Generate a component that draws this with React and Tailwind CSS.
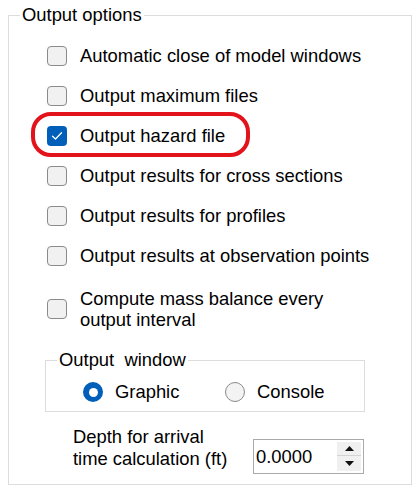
import React from "react";

function Checkbox({ checked }) {
  if (checked) {
    return (
      <div className="w-[20px] h-[20px] shrink-0 rounded-[4px] bg-[#005fb8] flex items-center justify-center">
        <svg width="12" height="10" viewBox="0 0 12 10" fill="none">
          <path d="M1.5 5.2 L4.5 8 L10.5 1.8" stroke="#ffffff" strokeWidth="1.3" strokeLinecap="round" strokeLinejoin="round" />
        </svg>
      </div>
    );
  }
  return <div className="w-[20px] h-[20px] shrink-0 rounded-[4px] border border-[#8a8a8a] bg-[#f1f1f1]" />;
}

function Radio({ checked }) {
  if (checked) {
    return (
      <div className="w-[20px] h-[20px] shrink-0 rounded-full bg-[#005fb8] flex items-center justify-center">
        <div className="w-[9px] h-[9px] rounded-full bg-white" />
      </div>
    );
  }
  return <div className="w-[20px] h-[20px] shrink-0 rounded-full border border-[#8a8a8a] bg-[#f3f3f3]" />;
}

function Row({ checked, children }) {
  return (
    <div className="flex items-center h-[40px] gap-[13px]">
      <Checkbox checked={checked} />
      <span className="whitespace-nowrap">{children}</span>
    </div>
  );
}

export default function App() {
  return (
    <div
      className="relative w-[419px] h-[490px] bg-white text-black text-[18.4px] overflow-hidden"
      style={{ fontFamily: '"Liberation Sans", Arial, sans-serif' }}
    >
      <fieldset className="ml-[8px] mt-[3px] w-[404px] h-[482px] border border-[#dcdcdc]">
        <legend className="ml-[11px] px-[2px] leading-[24px]">Output options</legend>
        <div className="flex flex-col">
          <div className="pt-[9px] pl-[38px] flex flex-col">
            <Row>Automatic close of model windows</Row>
            <Row>Output maximum files</Row>
            <Row checked>Output hazard file</Row>
            <Row>Output results for cross sections</Row>
            <Row>Output results for profiles</Row>
            <Row>Output results at observation points</Row>
            <div className="flex items-center gap-[13px] mt-[12px]">
              <Checkbox />
              <div className="leading-[21px]">
                Compute mass balance every
                <br />
                output interval
              </div>
            </div>
          </div>

          <fieldset className="ml-[36px] mt-[18px] w-[320px] h-[64px] border border-[#dcdcdc]">
            <legend className="ml-[11px] px-[2px] leading-[24px] whitespace-pre">Output  window</legend>
            <div className="mt-[8px] pl-[37px] h-[24px] flex items-center">
              <div className="w-[142px] flex items-center gap-[12px]">
                <Radio checked />
                <span>Graphic</span>
              </div>
              <div className="flex items-center gap-[12px]">
                <Radio />
                <span>Console</span>
              </div>
            </div>
          </fieldset>

          <div className="mt-[14px] pl-[64px] flex items-start">
            <div className="w-[180px] leading-[22px] whitespace-nowrap">
              Depth for arrival
              <br />
              time calculation (ft)
            </div>
            <div className="mt-[13px] w-[111px] h-[35px] border border-[#a9a9a9] bg-white flex items-center justify-between pl-[2px] pr-[2px]">
              <span className="leading-[22px]">0.0000</span>
              <div className="w-[24px] h-[29px] flex flex-col bg-[#f0f0f0]">
                <div className="h-[14px] flex items-center justify-center border-b border-[#d4d4d4]">
                  <svg width="9" height="5" viewBox="0 0 9 5"><path d="M0 5 L4.5 0 L9 5 Z" fill="#111" /></svg>
                </div>
                <div className="flex-1 flex items-center justify-center">
                  <svg width="9" height="5" viewBox="0 0 9 5"><path d="M0 0 L9 0 L4.5 5 Z" fill="#111" /></svg>
                </div>
              </div>
            </div>
          </div>
        </div>
      </fieldset>

      <div className="absolute left-[31px] top-[112px] w-[219px] h-[45px] border-[4px] border-[#e3131b] rounded-[20px] pointer-events-none" />
    </div>
  );
}
